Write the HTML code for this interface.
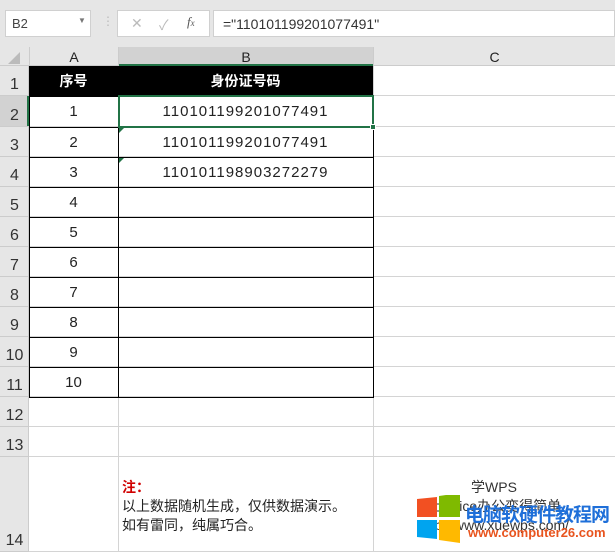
<!DOCTYPE html>
<html><head><meta charset="utf-8"><style>
*{margin:0;padding:0;box-sizing:border-box}
body{width:615px;height:552px;overflow:hidden;background:#fff;position:relative;font-family:"Liberation Sans","Noto Sans CJK SC",sans-serif;font-size:14px;color:#222}
.a{position:absolute}
.c{display:flex;align-items:center;justify-content:center}
</style></head><body>
<div class="a" style="left:0;top:0;width:615px;height:47px;background:#e6e6e6"></div>
<div class="a" style="left:5px;top:10px;width:86px;height:27px;background:#fff;border:1px solid #d0d0d0;font-size:13px;color:#444;padding:5px 0 0 6px">B2<span class="a" style="left:72px;top:5px;font-size:8px;color:#777">▼</span></div>
<div class="a" style="left:102px;top:14px;color:#bbb;font-size:12px">⋮</div>
<div class="a" style="left:117px;top:10px;width:93px;height:27px;background:#fff;border:1px solid #d0d0d0;color:#bbb;font-size:14px">
<span class="a" style="left:13px;top:4px">✕</span><span class="a" style="left:41px;top:4px">✓</span><span class="a" style="left:69px;top:3px;color:#555;font-family:'Liberation Serif',serif;font-style:italic;font-size:13px">f<span style="font-size:9px">x</span></span></div>
<div class="a" style="left:213px;top:10px;width:402px;height:27px;background:#fff;border:1px solid #d0d0d0;font-size:14px;color:#333;padding:5px 0 0 9px">="110101199201077491"</div>
<div class="a" style="left:0;top:47px;width:615px;height:19px;background:#e6e6e6;border-bottom:1px solid #ccc"></div>
<div class="a" style="left:118px;top:47px;width:255px;height:19px;background:#d2d2d2;border-bottom:2px solid #217346"></div>
<div class="a c" style="left:29px;top:47px;width:89px;height:19px;border-left:1px solid #ccc">A</div>
<div class="a c" style="left:118px;top:47px;width:255px;height:19px;border-left:1px solid #ccc">B</div>
<div class="a c" style="left:373px;top:47px;width:242px;height:19px;border-left:1px solid #ccc">C</div>
<div class="a" style="left:8px;top:52px;width:0;height:0;border-left:12px solid transparent;border-bottom:12px solid #bbb"></div>
<div class="a" style="left:0;top:66px;width:29px;height:486px;background:#e6e6e6;border-right:1px solid #ccc"></div>
<div class="a" style="left:0;top:96px;width:29px;height:31px;background:#d2d2d2;border-right:2px solid #217346"></div>
<div id="rows"></div>
<script>
var tops=[66,96,127,157,187,217,247,277,307,337,367,397,427,457,552];
var h='';
for(var i=0;i<14;i++){var t=tops[i],b=tops[i+1];
h+='<div class="a" style="left:0;top:'+t+'px;width:29px;height:'+(b-t)+'px;border-bottom:1px solid #ccc;font-size:16px;color:#333;display:flex;align-items:flex-end;justify-content:center;padding-bottom:1px">'+(i+1)+'</div>';
h+='<div class="a" style="left:29px;top:'+(b-1)+'px;width:586px;height:1px;background:#d4d4d4"></div>';}
[118,373].forEach(function(x){h+='<div class="a" style="left:'+x+'px;top:66px;width:1px;height:486px;background:#d4d4d4"></div>'});
h+='<div class="a" style="left:29px;top:66px;width:344px;height:30px;background:#000"></div>';
h+='<div class="a c" style="left:29px;top:66px;width:89px;height:30px;color:#fff;font-weight:bold">序号</div>';
h+='<div class="a c" style="left:118px;top:66px;width:255px;height:30px;color:#fff;font-weight:bold">身份证号码</div>';
var ids=['110101199201077491','110101199201077491','110101198903272279'];
for(var i=1;i<11;i++){var t=tops[i],b=tops[i+1];
h+='<div class="a c" style="left:29px;top:'+t+'px;width:345px;height:'+(b-t+1)+'px;border:1px solid #000"></div>';
h+='<div class="a" style="left:118px;top:'+t+'px;width:1px;height:'+(b-t)+'px;background:#000"></div>';
h+='<div class="a c" style="left:29px;top:'+t+'px;width:89px;height:'+(b-t)+'px;font-size:15px">'+i+'</div>';
if(i<=3)h+='<div class="a c" style="left:118px;top:'+t+'px;width:255px;height:'+(b-t)+'px;font-size:15px;letter-spacing:1px">'+ids[i-1]+'</div>';}
h+='<div class="a" style="left:118px;top:95px;width:256px;height:33px;border:2px solid #217346"></div>';
h+='<div class="a" style="left:370px;top:124px;width:6px;height:6px;background:#217346;border:1px solid #fff"></div>';
h+='<div class="a" style="left:119px;top:128px;width:0;height:0;border-top:5px solid #217346;border-right:5px solid transparent"></div>';
h+='<div class="a" style="left:119px;top:158px;width:0;height:0;border-top:5px solid #217346;border-right:5px solid transparent"></div>';
document.getElementById('rows').innerHTML=h;
</script>
<div class="a" style="left:122px;top:478px;line-height:19px;font-size:14px">
<div style="color:#d00000;font-weight:bold">注：</div>
<div>以上数据随机生成，仅供数据演示。</div>
<div>如有雷同，纯属巧合。</div></div>
<div class="a" style="left:373px;top:478px;width:242px;text-align:center;line-height:19px;color:#333">学WPS<br>让Office办公变得简单<br>http://www.xuewps.com/</div>
<svg class="a" style="left:415px;top:495px" width="50" height="50"><polygon points="2,4 22,2 22,22 2,22" fill="#f25022"/><polygon points="24,1 45,-2 45,22 24,22" fill="#7fba00"/><polygon points="2,25 22,25 22,44 2,42" fill="#00a4ef"/><polygon points="24,25 45,25 45,48 24,45" fill="#ffb900"/></svg>
<div class="a" style="left:465px;top:500px;font-size:19px;font-weight:bold;color:#1e6fd9;font-family:'Noto Sans CJK SC',sans-serif;letter-spacing:-1px">电脑软硬件教程网</div>
<div class="a" style="left:468px;top:525px;font-size:13px;font-weight:bold;color:#e8541e">www.computer26.com</div>
</body></html>
